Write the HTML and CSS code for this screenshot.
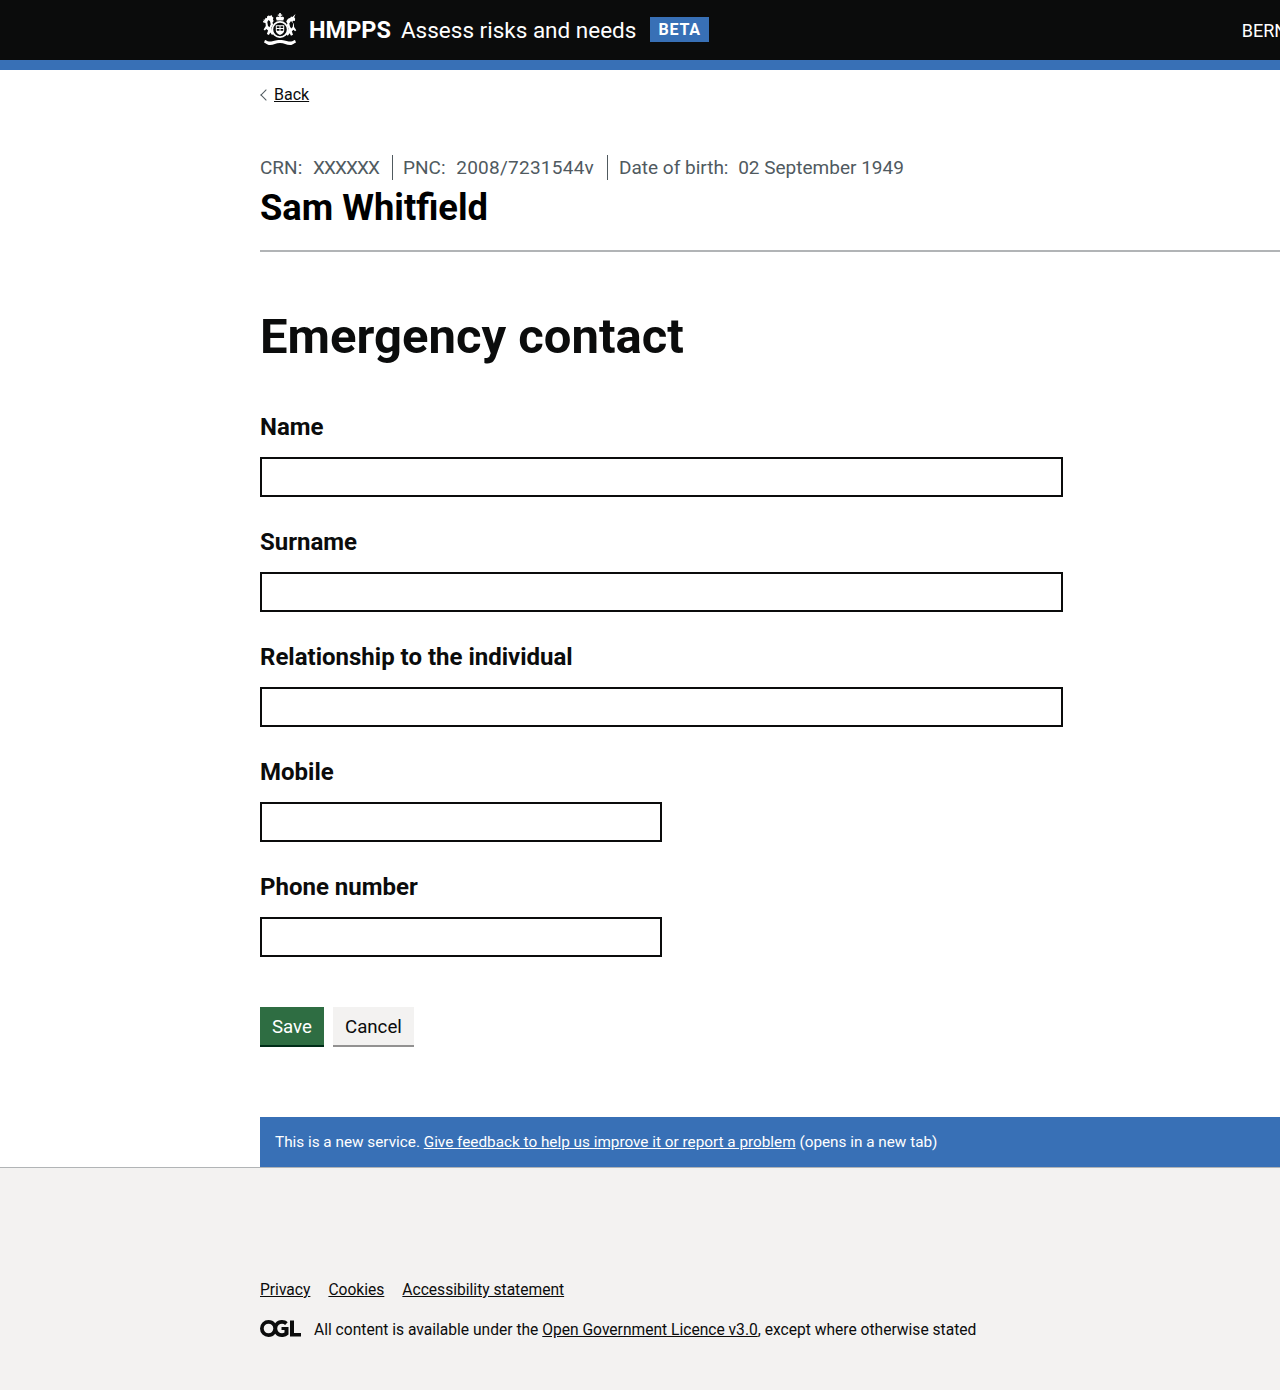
FILE: index.html
```html
<!DOCTYPE html>
<html lang="en">
<head>
    <meta charset="utf-8" />
    <title>Emergency contact</title>
    <link rel="stylesheet" href="styles.css">
</head>
<body>
<header class="site-header">
    <div class="site-header__inner">
        <div class="site-header__brand">
            <svg class="crest" viewBox="0 0 40 34" aria-hidden="true">
                <g fill="#fff">
                    <!-- crown -->
                    <path d="M19.200 0h1.600v1.500h1.400v1.300h-1.400v1.200c1.500-.6 3-.3 3.300 1l-.8 2.500h-6.600l-.8-2.500c.3-1.300 1.800-1.600 3.300-1V2.800h-1.400V1.500h1.400z"/>
                    <!-- garter and shield -->
                    <path fill-rule="evenodd" d="M20 8a8.500 8.500 0 1 1 0 17 8.500 8.500 0 0 1 0-17zm0 1.700a6.800 6.800 0 1 0 0 13.600 6.800 6.800 0 0 0 0-13.600z"/>
                    <path fill-rule="evenodd" d="M15.800 12.200h8.400v5.300c0 2.400-2.300 3.700-4.200 4.500-1.900-.8-4.200-2.100-4.200-4.500zm1 1v1.800h2.700v-1.800zm3.700 0v1.800h2.700v-1.800zm-3.700 2.800v1.800h2.700V16zm3.700 0v1.800h2.700V16z"/>
                    <!-- lion -->
                    <path fill-rule="evenodd" d="M7 3.500l1.500-1 1.500.5 1.500-1 .8 1.800 1.200 1-.6 1.700.8 1.500-1.200 1.500.6 2-1.600 3 .4 3 1.800 3.200-1.700 1.300-1.700-2.600-1.400 2.600-2-1 1.200-3.600-1.800-1.400-1.400 1.500-1.300-1 2.200-3.400-.3-3.200-2.200-.4-.3-1.700 1.700.4-1.500-1.500 1.800-.2.500-1.800 1.500.6zm1.500 3.500l-1.200 2 .7 4 1.500 1.200 1.200-3-.7-3z"/>
                    <!-- unicorn -->
                    <path fill-rule="evenodd" d="M35.500 1l-1.300 3.300 1 1.500-.4 2.200-1.800-.3-.6 1.200 1.400 1.800.3 3.200 2.200 3.400-1.300 1-1.400-1.500-1.800 1.400 1.200 3.600-2 1-1.400-2.600-1.700 2.600-1.700-1.300 1.800-3.200.4-3-1.600-3 .6-2-1.200-1.500 1-2 1.600-1.600 1.400-.2.800-1.500 1.400.4zM31 8l-1.700 2.500.7 3 1.200 2 1.500-1.500.5-3.500z"/>
                    <!-- motto scroll -->
                    <path d="M5 27c1.300.3 2 1.300 4 1.500 4 .4 5.500-1.500 11-1.500s7 1.900 11 1.500c2-.2 2.700-1.200 4-1.500l1 2.600c-1.500.3-2 1.900-4.700 2.300-4.300.6-6.800-1.900-11.300-1.900S13 32.500 8.700 31.900C6 31.500 5.500 29.900 4 29.600z"/>
                </g>
            </svg>
            <span class="site-header__org">HMPPS</span>
            <span class="site-header__service">Assess risks and needs</span>
            <span class="site-header__tag">BETA</span>
        </div>
        <span class="site-header__user">BERNARD</span>
    </div>
</header>

<div class="width-container">
    <a class="back-link" href="#">Back</a>

    <div class="offender">
        <p class="offender__meta">
            <span class="offender__item">CRN: <span class="offender__crn">XXXXXX</span></span>
            <span class="offender__item">PNC: <span class="offender__pnc">2008/7231544v</span></span>
            <span class="offender__item">Date of birth: <span class="offender__dob">02 September 1949</span></span>
        </p>
        <div class="offender__name">Sam Whitfield</div>
    </div>

    <main>
        <h1 class="page-title">Emergency contact</h1>
        <form>
            <div class="form-group">
                <label class="label" for="name">Name</label>
                <input class="input" id="name" type="text">
            </div>
            <div class="form-group">
                <label class="label" for="surname">Surname</label>
                <input class="input" id="surname" type="text">
            </div>
            <div class="form-group">
                <label class="label" for="relationship">Relationship to the individual</label>
                <input class="input" id="relationship" type="text">
            </div>
            <div class="form-group">
                <label class="label" for="mobile">Mobile</label>
                <input class="input input--half" id="mobile" type="text">
            </div>
            <div class="form-group">
                <label class="label" for="phone">Phone number</label>
                <input class="input input--half" id="phone" type="text">
            </div>
            <div class="button-group">
                <button class="button" type="button">Save</button>
                <button class="button button--secondary" type="button">Cancel</button>
            </div>
        </form>
    </main>

    <div class="feedback">
        <p class="feedback__text">This is a new service. <a href="#">Give feedback to help us improve it or report a problem</a> (opens in a new tab)</p>
    </div>
</div>

<footer class="footer">
    <div class="footer__inner">
        <ul class="footer__links">
            <li><a href="#">Privacy</a></li>
            <li><a href="#">Cookies</a></li>
            <li><a href="#">Accessibility statement</a></li>
        </ul>
        <div class="footer__licence">
            <svg class="ogl" viewBox="0 0 41 17" aria-hidden="true">
                <path fill="#0b0c0c" d="M8.500 0a8.500 8.500 0 0 1 6.700 3.300A8.500 8.500 0 0 1 22 0c2.300 0 4.300.8 5.700 2.200l-2.600 2.700A4.300 4.300 0 0 0 22 3.700a4.800 4.800 0 0 0 0 9.600c1 0 1.900-.3 2.500-.7v-2.500h-3V7h7v7.500A8.600 8.600 0 0 1 22 17a8.500 8.500 0 0 1-6.800-3.300A8.500 8.500 0 0 1 8.500 17a8.500 8.500 0 0 1 0-17zm0 3.700a4.800 4.800 0 1 0 0 9.600 4.800 4.800 0 0 0 0-9.600z"/>
                <path fill="#0b0c0c" d="M30 .5h4V13h7v3.500H30z"/>
            </svg>
            <span>All content is available under the <a href="#">Open Government Licence v3.0</a>, except where otherwise stated</span>
        </div>
    </div>
</footer>
</body>
</html>
```

FILE: styles.css
```css
html { overflow-x: hidden; }
body {
    margin: 0; background-color: #fff; color: #0b0c0c;
    font: 19px Roboto, Arial, sans-serif;
    overflow-x: hidden;
}
a { color: inherit; }

.site-header {
    height: 60px; background-color: #0b0c0c;
    border-bottom: 10px solid #3870b6; color: #fff;
}
.site-header__inner {
    display: flex; align-items: center; justify-content: space-between;
    width: 1062px; height: 60px; margin-left: 260px;
}
.site-header__brand { display: flex; align-items: center; }
.crest { width: 40px; height: 34px; margin-right: 9px; }
.site-header__org { font-size: 23.500px; font-weight: 700; margin-right: 10px; }
.site-header__service { font-size: 22.500px; margin-right: 14px; }
.site-header__tag {
    padding: 0 8px; height: 25px; line-height: 25px; margin-top: -2px;
    background-color: #3870b6; font-size: 16px; font-weight: 700; letter-spacing: .8px;
}
.site-header__user { font-size: 18px; }

.width-container { width: 1100px; margin-left: 260px; }

.back-link {
    display: inline-block; margin-top: 15px; padding-left: 14px;
    position: relative; font-size: 16px; line-height: 20px;
}
.back-link::before {
    content: ""; position: absolute; left: 2px; top: 6px;
    width: 7px; height: 7px; transform: rotate(-45deg);
    border-top: 1px solid #505a5f; border-left: 1px solid #505a5f;
}

.offender { margin-top: 50px; height: 95px; border-bottom: 2px solid #b1b4b6; }
.offender__meta { display: flex; margin: 0; color: #505a5f; font-size: 19px; line-height: 25px; }
.offender__item { padding-right: 13px; margin-right: 11px; border-right: 1px solid #505a5f; }
.offender__item:first-child { margin-right: 10px; }
.offender__item:last-child { border-right: 0; }
.offender__crn { margin-left: 6px; letter-spacing: -.9px; }
.offender__pnc { margin-left: 6px; letter-spacing: .25px; }
.offender__dob { margin-left: 5px; }
.offender__name { margin-top: 6px; font-size: 36.300px; line-height: 44px; font-weight: 700; color: #000; }

.page-title { margin: 55px 0 45px; font-size: 49px; line-height: 60px; font-weight: 700; }

.form-group { margin-bottom: 30px; }
.label { display: block; margin-bottom: 15px; font-size: 24px; line-height: 30px; font-weight: 700; }
.input {
    display: block; box-sizing: border-box; width: 803px; height: 40px;
    padding: 5px; border: 2px solid #0b0c0c; border-radius: 0; background: #fff;
}
.input--half { width: 402px; }

.button-group { display: flex; gap: 9px; margin-top: 50px; }
.button {
    height: 38px; padding: 2px 12px 0; margin: 0; border: 0; border-radius: 0;
    box-shadow: 0 2px 0 #002d18; background-color: #2e6d42; color: #fff;
    font: 18.700px Roboto, Arial, sans-serif;
}
.button--secondary { background-color: #f3f2f1; color: #0b0c0c; box-shadow: 0 2px 0 #929191; }

.feedback {
    display: flex; align-items: center; height: 50px; margin-top: 72px; padding-left: 15px;
    background-color: #3870b6; color: #fff; font-size: 15.300px;
}
.feedback__text { margin: 0; }

.footer { height: 222px; background-color: #f3f2f1; border-top: 1px solid #b1b4b6; }
.footer__inner { margin-left: 260px; padding-top: 112px; font-size: 15.600px; }
.footer__links { display: flex; gap: 18px; margin: 0 0 20px; padding: 0; list-style: none; line-height: 20px; }
.footer__licence { display: flex; align-items: center; gap: 13px; line-height: 20px; }
.ogl { width: 41px; height: 17px; margin-top: -3px; }
```
